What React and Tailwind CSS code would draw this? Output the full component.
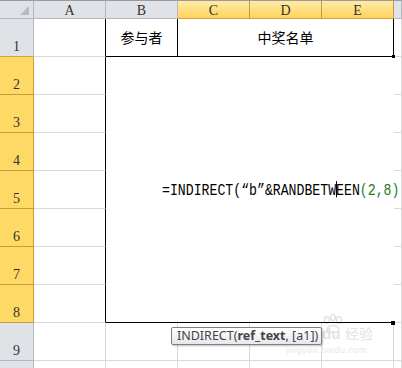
import React from "react";

const mono = { fontFamily: '"Liberation Mono", "DejaVu Sans Mono", monospace' };
const serif = { fontFamily: '"Liberation Serif", "DejaVu Serif", serif' };

function ColHdr({ label, hi }) {
  return (
    <div
      className={
        "border-t border-b border-r flex items-center justify-center pt-[2px] text-[14px] text-[#333] " +
        (hi
          ? "bg-gradient-to-b from-[#ffeba6] to-[#ffd35a] border-t-[#9c9c9c] border-r-[#c39a45] border-b-[#d9a23a]"
          : "bg-[#dfe3e8] border-t-[#9c9c9c] border-r-[#b3b9c1] border-b-[#b3b9c1]")
      }
      style={serif}
    >
      {label}
    </div>
  );
}

function RowHdr({ n, hi, bottomHi }) {
  return (
    <div
      className={
        "border-r border-b flex items-end justify-center pb-[1px] text-[14px] leading-[16px] text-[#333] " +
        (hi
          ? "bg-[#ffd966] border-r-[#c39a45] border-b-[#c99b3d]"
          : "bg-[#dfe3e8] border-r-[#b3b9c1] " + (bottomHi ? "border-b-[#d9a23a]" : "border-b-[#b3b9c1]"))
      }
      style={serif}
    >
      {n}
    </div>
  );
}

function Cell({ className = "", children }) {
  return <div className={"border-r border-b border-[#d9d9d9] " + className}>{children}</div>;
}

export default function App() {
  const cjk = { fontFamily: '"Noto Sans CJK SC", "Noto Sans", sans-serif' };
  return (
    <div className="relative w-[402px] h-[368px] overflow-hidden bg-white">
      <div className="grid grid-cols-[34px_72px_72px_72px_72px_72px_1fr] grid-rows-[19px_repeat(10,38px)] w-[402px]">
        {/* header */}
        <div className="border-t border-b border-r bg-[#dfe3e8] border-t-[#9c9c9c] border-r-[#b3b9c1] border-b-[#b3b9c1] flex items-end justify-end pr-[4px] pb-[3px]">
          <svg width="9" height="9" viewBox="0 0 9 9">
            <polygon points="9,0 9,9 0,9" fill="#b5bbc4" />
          </svg>
        </div>
        <ColHdr label="A" />
        <ColHdr label="B" />
        <ColHdr label="C" hi />
        <ColHdr label="D" hi />
        <ColHdr label="E" hi />
        <ColHdr label="" />

        {/* row 1 */}
        <RowHdr n="1" bottomHi />
        <Cell className="border-r-black" />
        <div
          className="border-r border-b border-black flex items-center justify-center text-[14px] text-black"
          style={cjk}
        >
          参与者
        </div>
        <div
          className="col-span-3 border-r border-b border-black flex items-center justify-center text-[14px] text-black"
          style={cjk}
        >
          中奖名单
        </div>
        <Cell />

        {/* row 2 */}
        <RowHdr n="2" hi />
        <Cell className="border-r-black" />
        <div className="col-span-4 row-span-7 border-b border-black relative z-10 flex items-center pl-[56px] pt-[3px] whitespace-nowrap overflow-visible">
          <span className="inline-block scale-y-125 text-[13.2px] text-black leading-none" style={mono}>
            =INDIRECT(“b”&amp;RANDBETW
            <span className="inline-block w-px h-[13px] bg-black align-middle -mr-px -translate-y-[1px]" />
            EEN<span className="text-[#1e7d1e]">(2,8)</span>
          </span>
        </div>
        <Cell />

        {[3, 4, 5, 6, 7, 8].map((n) => (
          <React.Fragment key={n}>
            <RowHdr n={String(n)} hi />
            <Cell className="border-r-black" />
            <Cell />
          </React.Fragment>
        ))}

        {/* row 9 */}
        <RowHdr n="9" />
        <Cell />
        <Cell />
        <Cell />
        <Cell />
        <Cell />
        <Cell />

        {/* row 10 (label hidden below the fold) */}
        <RowHdr n="" />
        <Cell />
        <Cell />
        <Cell />
        <Cell />
        <Cell />
        <Cell />
      </div>

      {/* fill handle */}
      <div className="absolute left-[391px] top-[321px] w-[4px] h-[4px] bg-black" />
      <div className="absolute left-[392px] top-[55px] w-[3px] h-[3px] bg-black" />

      {/* watermark */}
      <div className="absolute left-[322px] top-[314px] pointer-events-none">
        <svg width="22" height="20" viewBox="0 0 22 20" fill="none" stroke="#e2e2e2" strokeWidth="1.5">
          <ellipse cx="5" cy="6" rx="2.5" ry="3.2" />
          <ellipse cx="11" cy="3.5" rx="2.3" ry="3" />
          <ellipse cx="17" cy="6" rx="2.5" ry="3.2" />
          <path d="M5 16 C6 10, 16 10, 17 16 C17 19, 5 19, 5 16 Z" />
        </svg>
      </div>
      <div
        className="absolute left-[322px] top-[326px] text-[15px] leading-none text-[#e3e3e3] font-bold pointer-events-none"
        style={{ fontFamily: '"Liberation Sans", sans-serif' }}
      >
        du
      </div>
      <div
        className="absolute left-[345px] top-[326px] text-[14px] leading-none text-[#e3e3e3] pointer-events-none"
        style={cjk}
      >
        经验
      </div>
      <div
        className="absolute left-[286px] top-[346px] text-[9px] leading-none text-[#e6e6e6] tracking-[0.5px] pointer-events-none"
        style={{ fontFamily: '"Liberation Sans", sans-serif' }}
      >
        jingyan.baidu.com
      </div>

      {/* tooltip */}
      <div
        className="absolute left-[171px] top-[327px] w-[151px] h-[18px] border border-[#7f7f7f] rounded-[2px] bg-gradient-to-b from-white to-[#e6e7ee] shadow-[1px_1px_2px_rgba(0,0,0,0.25)] flex items-center pl-[5px] text-[12.5px] text-[#444] whitespace-nowrap"
        style={{ fontFamily: '"Noto Sans", "Open Sans", sans-serif' }}
      >
        INDIRECT(<span className="font-bold">ref_text</span>, [a1])
      </div>
    </div>
  );
}
